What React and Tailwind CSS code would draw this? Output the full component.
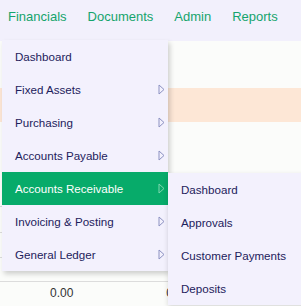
import React from 'react';

const mainItems = [
    { label: 'Dashboard', arrow: false },
    { label: 'Fixed Assets', arrow: true },
    { label: 'Purchasing', arrow: true },
    { label: 'Accounts Payable', arrow: true },
    { label: 'Accounts Receivable', arrow: true, active: true },
    { label: 'Invoicing & Posting', arrow: true },
    { label: 'General Ledger', arrow: true },
];

const subItems = ['Dashboard', 'Approvals', 'Customer Payments', 'Deposits'];

const Arrow = ({ active }) => (
    <svg width="7" height="11" viewBox="0 0 7 11" className="shrink-0">
        <path
            d="M1 1 L6 5.5 L1 10 Z"
            fill="none"
            stroke={active ? '#7fd6ae' : '#8d92c2'}
            strokeWidth="1"
        />
    </svg>
);

const App = () => {
    return (
        <div className="relative w-[301px] h-[306px] overflow-hidden bg-[#fbfcfa] font-['Liberation_Sans',Arial,sans-serif]">
            {/* Top navigation */}
            <nav className="h-[41px] bg-[#f2f0fc] flex items-start pt-[7px] px-2 gap-[21px] text-[13px] text-[#15a46c]">
                <span>Financials</span>
                <span>Documents</span>
                <span>Admin</span>
                <span>Reports</span>
            </nav>

            {/* Page content behind the menu */}
            <div className="flex flex-col">
                <div className="h-[47px]" />
                <div className="h-[34px] bg-[#fde7d6]" />
                <div className="h-[85px] border-b border-[#dcdcdc]" />
                <div className="h-[26px] border-b border-[#dcdcdc]" />
                <div className="h-[25px] border-b border-[#dcdcdc]" />
                <div className="h-[24px] border-b border-[#dcdcdc]" />
                <div className="h-[22px] flex items-center text-[12px] text-[#333]">
                    <span className="ml-[50px]">0.00</span>
                    <span className="ml-[93px]">0.00</span>
                </div>
            </div>

            {/* Financials dropdown */}
            <div className="absolute left-[2px] top-[40px] w-[166px] bg-[#f3f1fd] shadow-[2px_3px_5px_rgba(0,0,0,0.18)]">
                {mainItems.map((item) => (
                    <div
                        key={item.label}
                        className={`h-[33px] flex items-center justify-between pl-[13px] pr-[3px] text-[11.6px] ${
                            item.active ? 'bg-[#07ab6a] text-white' : 'text-[#1d215c]'
                        }`}
                    >
                        <span>{item.label}</span>
                        {item.arrow && <Arrow active={item.active} />}
                    </div>
                ))}
            </div>

            {/* Accounts Receivable submenu */}
            <div className="absolute left-[168px] top-[173px] w-[140px] bg-[#f3f1fd] shadow-[0_2px_5px_rgba(0,0,0,0.15)]">
                {subItems.map((label) => (
                    <div key={label} className="h-[33px] flex items-center pl-[13px] text-[11.6px] text-[#1d215c]">
                        {label}
                    </div>
                ))}
            </div>
        </div>
    );
};

export default App;
